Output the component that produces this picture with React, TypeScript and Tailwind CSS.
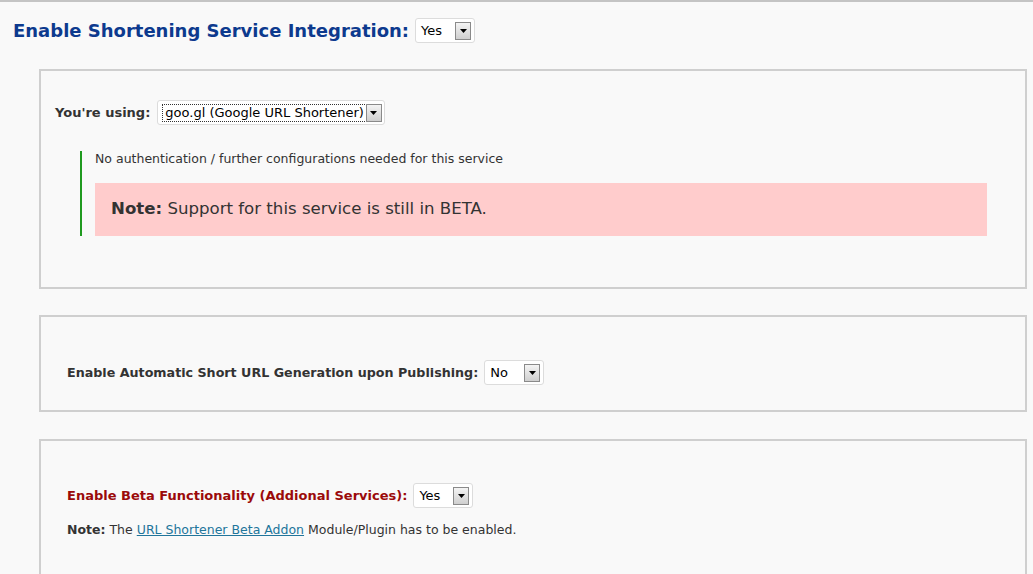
import React from "react";

function FakeSelect({
  value,
  width,
  dotted = false,
}: {
  value: string;
  width: string;
  dotted?: boolean;
}) {
  return (
    <span
      className={`inline-flex h-[25px] items-center justify-between rounded-[3px] border border-[#dcdcdc] bg-white pl-[5px] pr-[3px] ${width}`}
    >
      <span
        className={`whitespace-nowrap text-[13px] leading-[16px] text-black ${
          dotted ? "outline-1 outline-dotted outline-[#333] px-[2px]" : ""
        }`}
      >
        {value}
      </span>
      <span className="flex h-[18px] w-[16px] shrink-0 items-center justify-center border border-[#8a8a8a] bg-gradient-to-b from-[#f4f4f4] to-[#cfcfcf]">
        <svg width="7" height="4" viewBox="0 0 7 4">
          <path d="M0 0h7L3.5 4z" fill="#000" />
        </svg>
      </span>
    </span>
  );
}

function Panel({ children, className = "" }: { children: React.ReactNode; className?: string }) {
  return (
    <div className={`ml-[39px] mr-[6px] border-2 border-[#cfcfcf] bg-[#f9f9f9] ${className}`}>
      {children}
    </div>
  );
}

export default function App() {
  return (
    <div
      className="h-[574px] w-[1033px] overflow-hidden border-t-2 border-[#c4c4c4] bg-[#f9f9f9] text-[#333]"
      style={{ fontFamily: '"DejaVu Sans", Verdana, sans-serif' }}
    >
      <div className="flex items-center gap-[6px] pl-[13px] pt-[16px]">
        <h2 className="text-[18px] leading-[25px] font-bold text-[#0d3a8e]">Enable Shortening Service Integration:</h2>
        <FakeSelect value="Yes" width="w-[60px]" />
      </div>

      <Panel className="mt-[26px] h-[220px] pl-[14px] pr-[38px] pt-[29px]">
        <div className="flex items-center gap-[7px]">
          <span className="text-[13px] font-bold text-[#333]">You're using:</span>
          <FakeSelect value="goo.gl (Google URL Shortener)" width="w-[228px]" dotted />
        </div>
        <div className="ml-[25px] mt-[26px] border-l-2 border-[#1f9a1f] pl-[13px]">
          <p className="text-[12.5px] leading-[15px] text-[#333]">
            No authentication / further configurations needed for this service
          </p>
          <div className="mt-[17px] flex h-[53px] items-center bg-[#ffcccc] pl-[16px]">
            <p className="text-[16.6px] text-[#333]">
              <b>Note:</b> Support for this service is still in BETA.
            </p>
          </div>
        </div>
      </Panel>

      <Panel className="mt-[26px] flex h-[97px] items-center pl-[26px] pt-[18px]">
        <div className="flex items-center gap-[6px]">
          <span className="text-[12.7px] font-bold text-[#333]">
            Enable Automatic Short URL Generation upon Publishing:
          </span>
          <FakeSelect value="No" width="w-[60px]" />
        </div>
      </Panel>

      <Panel className="mt-[27px] h-[160px] pl-[26px] pt-[42px]">
        <div className="flex items-center gap-[6px]">
          <span className="text-[13px] font-bold text-[#9b0a0a]">
            Enable Beta Functionality (Addional Services):
          </span>
          <FakeSelect value="Yes" width="w-[60px]" />
        </div>
        <p className="mt-[13px] text-[12.5px] text-[#333]">
          <b>Note:</b> The{" "}
          <a href="#" className="text-[#21759b] underline">
            URL Shortener Beta Addon
          </a>{" "}
          Module/Plugin has to be enabled.
        </p>
      </Panel>
    </div>
  );
}
